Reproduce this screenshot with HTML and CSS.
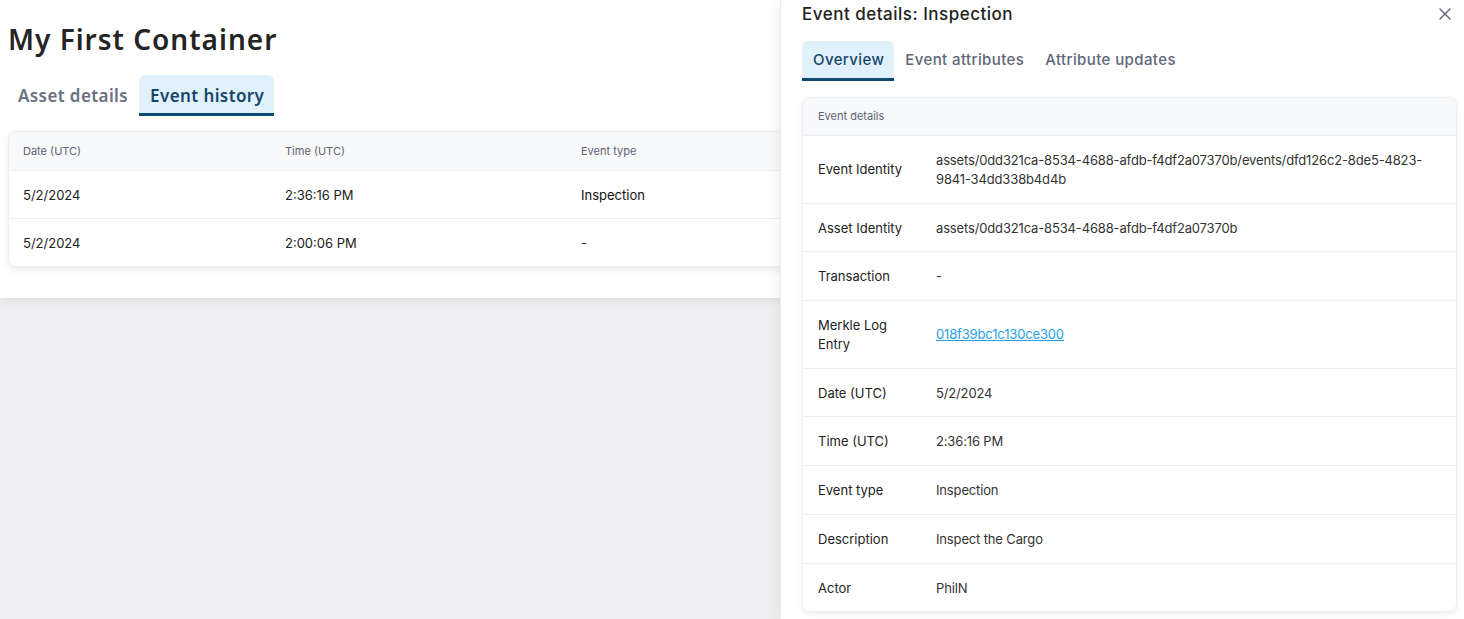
FILE: index.html
```html
<!DOCTYPE html>
<html lang="en">
<head>
<meta charset="utf-8">
<title>My First Container</title>
<link rel="stylesheet" href="styles.css">
</head>
<body>
<div class="app">
  <main class="page">
    <h1 class="page-title">My First Container</h1>
    <nav class="page-tabs">
      <div class="page-tab">Asset details</div>
      <div class="page-tab active">Event history</div>
    </nav>
    <section class="history-card">
      <div class="history-row head">
        <div>Date (UTC)</div>
        <div>Time (UTC)</div>
        <div>Event type</div>
      </div>
      <div class="history-row">
        <div>5/2/2024</div>
        <div>2:36:16 PM</div>
        <div class="strong">Inspection</div>
      </div>
      <div class="history-row">
        <div>5/2/2024</div>
        <div>2:00:06 PM</div>
        <div>-</div>
      </div>
    </section>
  </main>

  <aside class="drawer">
    <header class="drawer-head">
      <h2 class="drawer-title">Event details: Inspection</h2>
      <button class="close-btn" aria-label="Close">
        <svg width="12" height="12" viewBox="0 0 12 12"><path d="M1 1L11 11M11 1L1 11" stroke="#5b6275" stroke-width="1.4" stroke-linecap="round"/></svg>
      </button>
    </header>
    <nav class="drawer-tabs">
      <div class="drawer-tab active">Overview</div>
      <div class="drawer-tab">Event attributes</div>
      <div class="drawer-tab">Attribute updates</div>
    </nav>
    <section class="detail-card">
      <div class="detail-head">Event details</div>
      <div class="detail-row"><div class="label">Event Identity</div><div class="value">assets/0dd321ca-8534-4688-afdb-f4df2a07370b/events/dfd126c2-8de5-4823-9841-34dd338b4d4b</div></div>
      <div class="detail-row"><div class="label">Asset Identity</div><div class="value">assets/0dd321ca-8534-4688-afdb-f4df2a07370b</div></div>
      <div class="detail-row"><div class="label">Transaction</div><div class="value">-</div></div>
      <div class="detail-row"><div class="label">Merkle Log Entry</div><div class="value"><a class="link" href="#">018f39bc1c130ce300</a></div></div>
      <div class="detail-row"><div class="label">Date (UTC)</div><div class="value">5/2/2024</div></div>
      <div class="detail-row"><div class="label">Time (UTC)</div><div class="value">2:36:16 PM</div></div>
      <div class="detail-row"><div class="label">Event type</div><div class="value">Inspection</div></div>
      <div class="detail-row"><div class="label">Description</div><div class="value">Inspect the Cargo</div></div>
      <div class="detail-row"><div class="label">Actor</div><div class="value">PhilN</div></div>
    </section>
  </aside>
</div>
</body>
</html>
```

FILE: styles.css
```css
* { box-sizing: border-box; }
html, body { margin: 0; padding: 0; }
body {
  background: #efeff1;
  font-family: Inter, "Noto Sans", sans-serif;
  color: #222;
  width: 1464px;
  height: 619px;
  overflow: hidden;
}
.app { position: relative; height: 619px; }

.page {
  background: #fff;
  height: 298px;
  padding: 23px 8px 0 8px;
  box-shadow: 0 2px 10px rgba(0,0,0,0.08);
}
.page-title {
  margin: 0;
  font-family: "Noto Sans", sans-serif;
  font-weight: 600;
  font-size: 28px;
  line-height: 32px;
  color: #242424;
  letter-spacing: 1px;
}
.page-tabs {
  display: flex;
  margin-top: 20px;
}
.page-tab {
  font-family: "Noto Sans", sans-serif;
  font-weight: 600;
  font-size: 17px;
  letter-spacing: 0.4px;
  color: #6a7080;
  height: 41px;
  padding: 9px 11px 0 10px;
  border-bottom: 3px solid transparent;
  border-radius: 6px 6px 0 0;
}
.page-tab.active {
  background: #e1f1fc;
  color: #15466a;
  border-bottom-color: #0e4a70;
  padding-left: 11px;
  padding-right: 10px;
}

.history-card {
  margin-top: 15px;
  border: 1px solid #eceef1;
  border-radius: 8px;
  overflow: hidden;
  box-shadow: 0 3px 8px rgba(0,0,0,0.08);
  background: #fff;
}
.history-row {
  display: grid;
  grid-template-columns: 262px 296px 1fr;
  padding: 0 14px;
  height: 48px;
  align-items: center;
  font-size: 13px;
  color: #222;
  border-top: 1px solid #eceef1;
}
.history-row.head {
  height: 38px;
  border-top: 0;
  background: #f8f9fa;
  font-size: 11px;
  color: #5d6372;
}
.history-row .strong { color: #111; }

.drawer {
  position: absolute;
  top: 0;
  right: 0;
  bottom: 0;
  width: 684px;
  background: #fff;
  border-left: 1px solid #ebebee;
  box-shadow: -4px 0 12px rgba(0,0,0,0.05);
  padding: 0 7px 0 21px;
}
.drawer-head {
  display: flex;
  justify-content: space-between;
  align-items: center;
  height: 27px;
}
.drawer-title {
  margin: 0;
  font-size: 17px;
  font-weight: 500;
  letter-spacing: 0.5px;
  color: #222;
  line-height: 24px;
}
.close-btn {
  border: 0;
  background: none;
  padding: 0;
  margin-right: 5px;
  width: 14px;
  height: 14px;
  display: flex;
  align-items: center;
  justify-content: center;
}
.drawer-tabs {
  display: flex;
  margin-top: 14px;
}
.drawer-tab {
  font-size: 15px;
  font-weight: 500;
  letter-spacing: 0.4px;
  color: #5f6679;
  height: 40px;
  padding: 9px 10px 0 11px;
  border-bottom: 3px solid transparent;
  border-radius: 6px 6px 0 0;
}
.drawer-tab.active {
  background: #e1f1fc;
  color: #15466a;
  border-bottom-color: #0e4a70;
}

.detail-card {
  margin-top: 16px;
  border: 1px solid #eceef1;
  border-radius: 8px;
  overflow: hidden;
  box-shadow: 0 2px 6px rgba(0,0,0,0.07);
}
.detail-head {
  height: 37px;
  background: #f8f9fa;
  font-size: 11px;
  color: #5d6372;
  padding: 0 15px 2px;
  display: flex;
  align-items: center;
}
.detail-row {
  display: grid;
  grid-template-columns: 88px 1fr;
  column-gap: 30px;
  align-items: center;
  padding: 15px 15px 14px;
  border-top: 1px solid #eceef1;
  font-size: 13px;
  line-height: 18.75px;
}
.label { color: #222; }
.value { color: #333; letter-spacing: -0.15px; }
.link { color: #1ea0e6; text-decoration: underline; }
```
